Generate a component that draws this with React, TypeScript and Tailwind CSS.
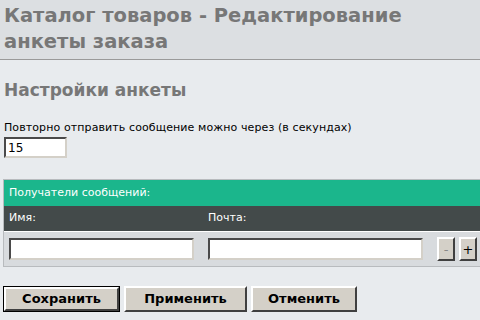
const body = { fontFamily: '"DejaVu Sans", Verdana, sans-serif' };

function Input({ className, value }: { className: string; value?: string }) {
  return (
    <input
      defaultValue={value}
      className={`bg-white border-2 border-t-[#4a4a4a] border-l-[#4a4a4a] border-b-[#d4d0c8] border-r-[#d4d0c8] outline-none text-[12px] text-black px-0.5 ${className}`}
      style={body}
    />
  );
}

function SmallBtn({ label, dim }: { label: string; dim?: boolean }) {
  return (
    <button
      className={`w-[18px] h-[24px] bg-[#d4d0c8] border-2 border-t-white border-l-white border-b-[#404040] border-r-[#404040] text-[13px] leading-none flex items-center justify-center ${dim ? 'text-[#888]' : 'text-black'}`}
    >
      {label}
    </button>
  );
}

export default function App() {
  return (
    <div className="w-[480px] h-[320px] overflow-hidden bg-[#e8ebee]" style={body}>
      {/* Header */}
      <div className="h-[60px] bg-[#dcdfe2] border-b border-[#9a9a9a] px-1 pt-[3px]">
        <h1 className="text-[19.5px] leading-[26px] font-bold text-[#777]">
          Каталог товаров - Редактирование анкеты заказа
        </h1>
      </div>

      <div className="px-1 pt-[18px]">
        <h2 className="text-[17px] leading-[24px] font-bold text-[#777]">Настройки анкеты</h2>

        <div className="mt-[19px] text-[11px] leading-[14px] tracking-[0.1px] text-black">
          Повторно отправить сообщение можно через (в секундах)
        </div>
        <Input value="15" className="w-[63px] h-[21px] mt-[2px] block" />
      </div>

      {/* Recipients panel */}
      <div className="ml-[3px] mt-[21px] border border-[#b8bbbe] border-r-0">
        <div className="h-[26px] bg-[#1bb68c] text-white text-[11px] flex items-center px-[5px]">
          Получатели сообщений:
        </div>
        <div className="h-[26px] bg-[#434a4a] text-white text-[11px] flex items-center border-b border-white">
          <div className="w-[204px] pl-[5px]">Имя:</div>
          <div>Почта:</div>
        </div>
        <div className="h-[34px] bg-[#d8dbde] flex items-center">
          <Input className="ml-[5px] w-[185px] h-[22px]" />
          <Input className="ml-[14px] w-[215px] h-[22px]" />
          <div className="ml-[14px] flex gap-[4px]">
            <SmallBtn label="-" dim />
            <SmallBtn label="+" />
          </div>
        </div>
      </div>

      {/* Buttons */}
      <div className="flex gap-[4px] pl-[3px] mt-[19px]">
        <button className="w-[117px] h-[26px] bg-[#d4d0c8] border border-black text-[13px] font-bold text-black">
          <span className="flex items-center justify-center w-full h-full border-2 border-t-white border-l-white border-b-[#404040] border-r-[#404040]">
            Сохранить
          </span>
        </button>
        <button className="w-[123px] h-[26px] bg-[#d4d0c8] border-2 border-t-white border-l-white border-b-[#404040] border-r-[#404040] text-[13px] font-bold text-black">
          Применить
        </button>
        <button className="w-[106px] h-[26px] bg-[#d4d0c8] border-2 border-t-white border-l-white border-b-[#404040] border-r-[#404040] text-[13px] font-bold text-black">
          Отменить
        </button>
      </div>
    </div>
  );
}
